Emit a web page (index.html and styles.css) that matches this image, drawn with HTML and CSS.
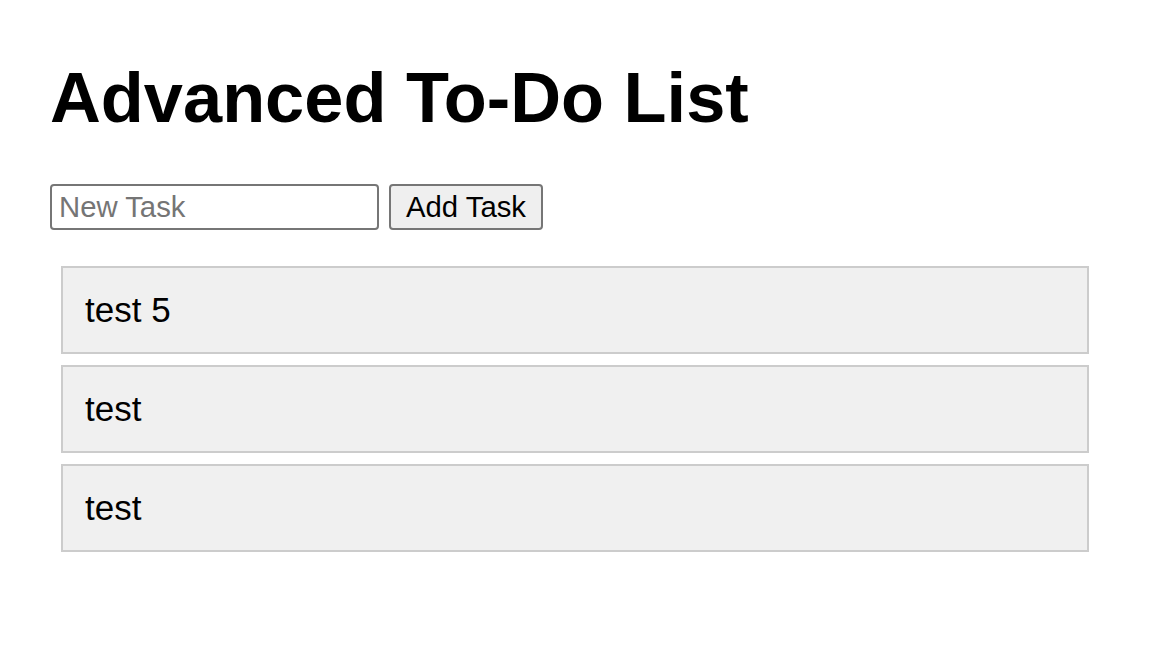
FILE: index.html
```html
<!DOCTYPE html>
<html lang="en">
<head>
<meta charset="utf-8">
<title>Advanced To-Do List</title>
<link rel="stylesheet" href="styles.css">
</head>
<body>
<div class="page">
  <h1 class="title">Advanced To-Do List</h1>
  <div class="add-row">
    <input class="task-input" type="text" placeholder="New Task">
    <button class="add-btn" type="button">Add Task</button>
  </div>
  <ul class="task-list">
    <li class="task">test 5</li>
    <li class="task">test</li>
    <li class="task">test</li>
  </ul>
</div>
</body>
</html>
```

FILE: styles.css
```css
html, body {
  margin: 0;
  padding: 0;
  background: #ffffff;
}

body {
  font-family: "Liberation Sans", Arial, sans-serif;
  color: #000000;
}

.page {
  padding: 10px 50px 0 50px;
}

.title {
  font-size: 70.4px;
  font-weight: bold;
  line-height: normal;
  margin: 47px 0 46px 0;
}

.add-row {
  display: flex;
  gap: 10px;
  align-items: center;
}

.task-input {
  box-sizing: border-box;
  width: 329px;
  height: 46px;
  border: 2px solid #767676;
  border-radius: 4px;
  padding: 0 7px;
  font-family: "Liberation Sans", Arial, sans-serif;
  font-size: 29.3px;
  color: #000000;
  background: #ffffff;
  outline: none;
}

.task-input::placeholder {
  color: #757575;
}

.add-btn {
  box-sizing: border-box;
  width: 154px;
  height: 46px;
  border: 2px solid #767676;
  border-radius: 4px;
  background: #efefef;
  padding: 0 12px;
  font-family: "Liberation Sans", Arial, sans-serif;
  font-size: 29.3px;
  color: #000000;
}

.task-list {
  list-style: none;
  padding: 0;
  margin: 36px 0 0 0;
}

.task {
  box-sizing: border-box;
  height: 88px;
  margin: 0 13px 11px 11px;
  padding: 22px 22px;
  border: 2px solid #cccccc;
  background: #f0f0f0;
  font-size: 35px;
  line-height: 40px;
}
```
